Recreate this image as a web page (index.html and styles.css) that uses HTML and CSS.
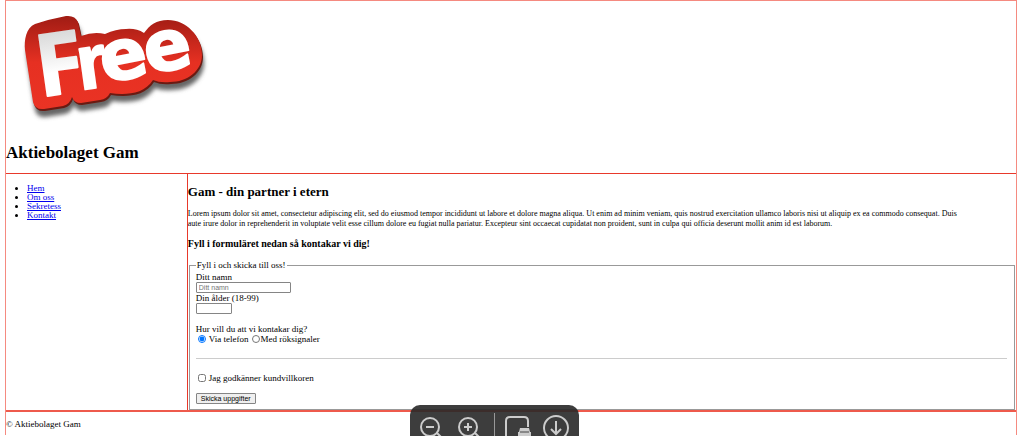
FILE: index.html
```
<!DOCTYPE html>
<html lang="sv">
<head>
    <meta charset="UTF-8">
    <meta name="viewport" content="width=device-width, initial-scale=1.0">
    <title>Aktiebolaget Gam</title>
    <link rel="stylesheet" href="styles.css">
</head>
<body>
<div class="container">
    <header>
        <svg class="logo" width="212" height="132" viewBox="0 0 212 132" role="img" aria-label="Free">
            <defs>
                <linearGradient id="red" x1="0" y1="0" x2="0" y2="1">
                    <stop offset="0" stop-color="#a01c14"/>
                    <stop offset="0.5" stop-color="#e63022"/>
                    <stop offset="1" stop-color="#ea3324"/>
                </linearGradient>
                <linearGradient id="shine" x1="0" y1="0" x2="0" y2="1">
                    <stop offset="0.2" stop-color="#d4d4d4"/>
                    <stop offset="0.6" stop-color="#ffffff"/>
                </linearGradient>
                <filter id="soft" x="-10%" y="-10%" width="120%" height="130%">
                    <feGaussianBlur stdDeviation="2"/>
                </filter>
                <path id="badge" d="M19 48C18 38 20 26 29 22Q44 17 60 14Q69 13 72 20L75 34Q88 29 99 32Q110 27 120 27Q130 26 138 31C144 23 150 18 162 18C180 18 196 34 196 53C196 69 181 80 164 80Q154 81 147 78C140 89 128 92 116 92Q110 92 104 91Q101 97 94 98L75 101Q68 101 66 95Q64 102 57 104L38 107Q29 108 27 100Z"/>
            </defs>
            <use href="#badge" x="2" y="8" fill="#666666" filter="url(#soft)"/>
            <use href="#badge" x="1" y="2" fill="#6a1a12"/>
            <use href="#badge" fill="url(#red)"/>
            <g class="logo-text">
                <text class="logo-cap" transform="translate(34 95) rotate(-8)" fill="url(#shine)" stroke="url(#shine)">F</text>
                <text class="logo-r" transform="translate(74 88) rotate(-8)">r</text>
                <text transform="translate(98 81) rotate(-11)">e</text>
                <text transform="translate(142 72) rotate(-11)">e</text>
            </g>
        </svg>
        <h1>Aktiebolaget Gam</h1>
    </header>
    <div class="content">
        <nav>
            <ul>
                <li><a href="#">Hem</a></li>
                <li><a href="#">Om oss</a></li>
                <li><a href="#">Sekretess</a></li>
                <li><a href="#">Kontakt</a></li>
            </ul>
        </nav>
        <main>
            <h2>Gam - din partner i etern</h2>
            <p class="intro">Lorem ipsum dolor sit amet, consectetur adipiscing elit, sed do eiusmod tempor incididunt ut labore et dolore magna aliqua. Ut enim ad minim veniam, quis nostrud exercitation ullamco laboris nisi ut aliquip ex ea commodo consequat. Duis aute irure dolor in reprehenderit in voluptate velit esse cillum dolore eu fugiat nulla pariatur. Excepteur sint occaecat cupidatat non proident, sunt in culpa qui officia deserunt mollit anim id est laborum.</p>
            <h3>Fyll i formuläret nedan så kontakar vi dig!</h3>
            <form>
                <fieldset>
                    <legend>Fyll i och skicka till oss!</legend>
                    <label for="namn">Ditt namn</label>
                    <input type="text" id="namn" class="name" placeholder="Ditt namn">
                    <label for="alder">Din ålder (18-99)</label>
                    <input type="text" inputmode="numeric" id="alder" class="age">
                    <div class="question" id="fraga">Hur vill du att vi kontakar dig?</div>
                    <div class="choices" role="radiogroup" aria-labelledby="fraga">
                        <input type="radio" name="kontakt" id="telefon" checked>
                        <label for="telefon">Via telefon</label>
                        <input type="radio" name="kontakt" id="rok">
                        <label for="rok">Med röksignaler</label>
                    </div>
                    <hr>
                    <div class="choices">
                        <input type="checkbox" id="villkor">
                        <label for="villkor">Jag godkänner kundvillkoren</label>
                    </div>
                    <button type="submit">Skicka uppgifter</button>
                </fieldset>
            </form>
        </main>
    </div>
    <footer>
        <p>© Aktiebolaget Gam</p>
    </footer>
</div>

<div class="toolbar">
    <button type="button" aria-label="Zooma ut">
        <svg width="28" height="31" viewBox="0 0 28 31"><circle cx="12" cy="22" r="9"/><path d="M8 22h8M19 28l6 6"/></svg>
    </button>
    <button type="button" aria-label="Zooma in">
        <svg width="28" height="31" viewBox="0 0 28 31"><circle cx="12" cy="22" r="9"/><path d="M8 22h8M12 18v8M19 28l6 6"/></svg>
    </button>
    <span class="divider"></span>
    <button type="button" aria-label="Skriv ut">
        <svg width="28" height="31" viewBox="0 0 28 31"><path d="M1 32V16q0-4 4-4h14q4 0 4 4v6"/><path class="solid" d="M15 23h9l1 4h1v5H13v-5h1z"/><path class="slot" d="M15 27h9"/></svg>
    </button>
    <button type="button" aria-label="Ladda ner">
        <svg width="28" height="31" viewBox="0 0 28 31"><circle cx="13" cy="23" r="12"/><path d="M13 16v13M8 24l5 5 5-5"/></svg>
    </button>
</div>
</body>
</html>
```
FILE: styles.css
```
* {
    box-sizing: border-box;
}

body {
    font-family: "Liberation Serif", "Times New Roman", serif;
    font-size: 9px;
    line-height: 10px;
    color: #000;
    background-color: #fff;
    margin: 0;
}

.container {
    display: flex;
    flex-direction: column;
    min-height: calc(100vh - 1px);
    margin: 0 7px 0 5px;
    border: 1px solid #f58a80;
    border-bottom: none;
}

header {
    padding-top: 1px;
    border-bottom: 1px solid #e8392b;
}

.logo {
    display: block;
    overflow: visible;
}

.logo-text {
    font-family: "DejaVu Sans", sans-serif;
    font-weight: bold;
    font-size: 70px;
    fill: #fff;
    stroke: #fff;
    stroke-width: 2;
    stroke-linejoin: round;
}

.logo-cap {
    font-family: "Open Sans", sans-serif;
    font-size: 86px;
}

.logo-r {
    font-family: "Liberation Sans", Arial, sans-serif;
    font-size: 77px;
}

h1 {
    font-size: 17px;
    line-height: 20px;
    margin: 9px 0 10px;
}

.content {
    display: grid;
    grid-template-columns: 18% 1fr;
    border-bottom: 2px solid #ee5a4c;
}

nav {
    border-right: 1px solid #e8392b;
}

nav ul {
    margin: 10px 0;
    padding-left: 21px;
    line-height: 9px;
}

nav a {
    color: #0000ee;
}

h2 {
    font-size: 13px;
    line-height: 16px;
    margin: 10px 0 9px;
}

p {
    margin: 0 0 9px;
}

.intro {
    padding-right: 6%;
    font-size: 8px;
}

h3 {
    font-size: 10px;
    line-height: 12px;
    margin: 0 0 10px;
}

fieldset {
    margin: 0 1px;
    padding: 2px 7px 5px 6px;
    border: 1px solid #999;
}

legend {
    padding: 0 1px;
}

fieldset > label {
    display: block;
}

input, fieldset button {
    font-family: "Liberation Sans", Arial, sans-serif;
    font-size: 7px;
}

.name, .age {
    display: block;
    height: 11px;
    padding: 0 2px;
    border: 1px solid #858585;
    border-radius: 1px;
}

.name {
    width: 95px;
}

.age {
    width: 36px;
}

.question {
    margin-top: 10px;
}

.choices {
    display: flex;
    align-items: center;
}

.choices input {
    width: 8px;
    height: 8px;
    margin: 0 3px 0 2px;
}

.choices label + input {
    margin: 0 1px 0 3px;
}

hr {
    margin: 14px 0;
    border: 0;
    border-top: 1px solid #ccc;
}

fieldset button {
    display: block;
    height: 11px;
    margin-top: 10px;
    padding: 0 4px;
    line-height: 9px;
    color: #000;
    background: #efefef;
    border: 1px solid #858585;
    border-radius: 1px;
}

footer {
    padding-top: 7px;
}

footer p {
    margin: 0;
}

/* viewer controls floating over the bottom edge */
.toolbar {
    position: fixed;
    bottom: 0;
    left: 40%;
    display: flex;
    gap: 10px;
    height: 31px;
    padding: 0 8px;
    background: rgba(40, 40, 40, 0.9);
    border-radius: 10px 10px 0 0;
}

.toolbar button {
    padding: 0;
    background: none;
    border: 0;
}

.toolbar svg {
    display: block;
    fill: none;
    stroke: #ccc;
    stroke-width: 2;
}

.toolbar .solid {
    fill: #ccc;
    stroke: none;
}

.toolbar .slot {
    stroke: #444;
    stroke-width: 1;
}

.divider {
    width: 1px;
    margin-top: 8px;
    background: #999;
}
```
